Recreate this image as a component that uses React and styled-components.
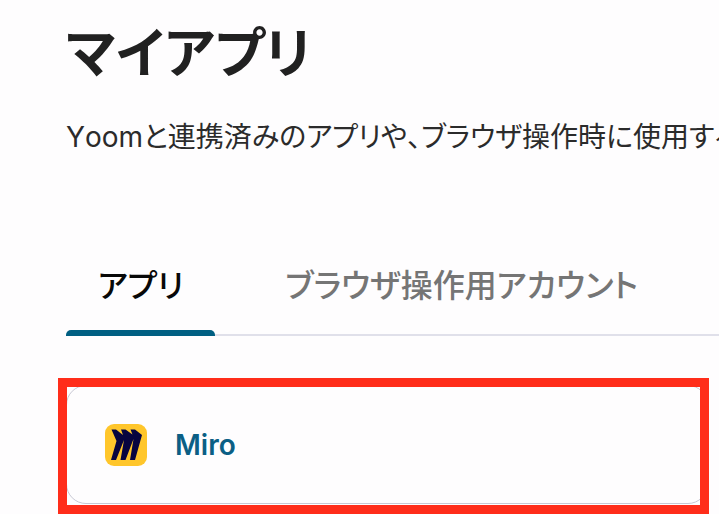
import React, { useState } from "react";
import styled, { createGlobalStyle } from "styled-components";

const GlobalStyle = createGlobalStyle`
  * {
    box-sizing: border-box;
  }
  body {
    margin: 0;
    overflow: hidden;
    background: #fefdfe;
    color: #222222;
    font-family: Inter, "Noto Sans CJK JP", sans-serif;
    font-feature-settings: "palt";
  }
`;

const Page = styled.main`
  padding: 14px 0 0 66px;
`;

const Title = styled.h1`
  margin: 0;
  font-size: 54px;
  line-height: 80px;
  font-weight: 700;
  font-kerning: none;
  color: #212121;
`;

const Description = styled.p`
  margin: 23px 0 0;
  font-size: 28px;
  line-height: 40px;
  font-kerning: none;
  color: #2b2b2b;
  white-space: nowrap;
`;

const Tabs = styled.div`
  display: flex;
  gap: 38px;
  margin-top: 105px;
  border-bottom: 2px solid #e0e0ea;
`;

const Tab = styled.button`
  display: flex;
  flex: none;
  flex-direction: column;
  padding: 0;
  margin-bottom: -2px;
  border: 0;
  background: none;
  font: inherit;
  font-feature-settings: inherit;
  font-size: 32px;
  line-height: 48px;
  font-weight: 500;
  color: ${({ $active }) => ($active ? "#080808" : "#757575")};
  cursor: pointer;

  &::after {
    content: "";
    width: 100%;
    height: 6px;
    margin-top: 20px;
    border-radius: 5px 5px 0 0;
    background: ${({ $active }) => ($active ? "#005f82" : "transparent")};
  }
`;

const TabLabel = styled.span`
  padding: 0 32px;
  white-space: nowrap;
`;

const Highlight = styled.section`
  margin: 42px 10px 0 -8px;
  border: 9px solid #ff2d1a;
  overflow: hidden;
`;

const AppCard = styled.a`
  display: flex;
  align-items: center;
  gap: 28px;
  height: 119px;
  margin: -2px -8px 1px -1px;
  padding: 0 38px;
  border: 1px solid #c8c8d4;
  border-radius: 20px;
  color: #0b5f85;
  font-size: 28px;
  line-height: 40px;
  font-weight: 600;
  text-decoration: none;
`;

const Logo = styled.svg`
  flex: none;
  width: 42px;
  height: 42px;
`;

function MiroLogo() {
  return (
    <Logo viewBox="0 0 42 42" aria-hidden="true">
      <rect width="42" height="42" rx="9" fill="#ffc62b" />
      <path
        fill="#07043f"
        d="M6.500 5.500H11L18 11L16 5.500H20.500L27.500 10.500L25.500 5.500H30L37 11L30 36H25L28.500 15L20.500 36H15.500L19 16L11 36H6L11.500 17Z"
      />
    </Logo>
  );
}

const tabs = ["アプリ", "ブラウザ操作用アカウント"];

export default function App() {
  const [active, setActive] = useState(0);
  return (
    <>
      <GlobalStyle />
      <Page lang="ja">
        <Title>マイアプリ</Title>
        <Description>
          Yoomと連携済みのアプリや、ブラウザ操作時に使用する
        </Description>
        <Tabs role="tablist">
          {tabs.map((label, i) => (
            <Tab
              key={label}
              type="button"
              role="tab"
              aria-selected={i === active}
              $active={i === active}
              onClick={() => setActive(i)}
            >
              <TabLabel>{label}</TabLabel>
            </Tab>
          ))}
        </Tabs>
        <Highlight>
          <AppCard href="#miro">
            <MiroLogo />
            Miro
          </AppCard>
        </Highlight>
      </Page>
    </>
  );
}
